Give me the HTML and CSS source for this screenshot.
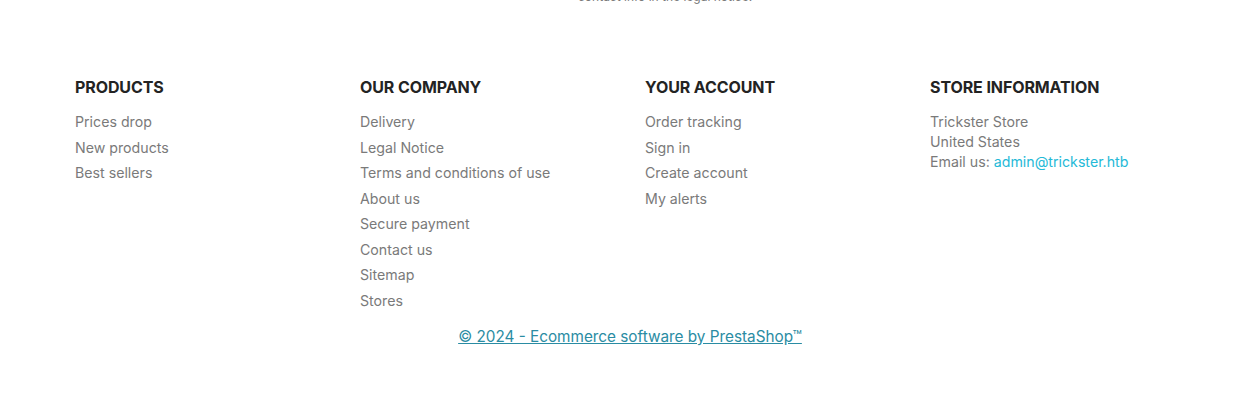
FILE: index.html
```html
<!DOCTYPE html>
<html lang="en">
<head>
<meta charset="utf-8">
<title>Footer</title>
<link rel="stylesheet" href="styles.css">
</head>
<body>
<div class="page">
  <div class="newsletter-note">
    <p>contact info in the legal notice.</p>
  </div>
  <footer class="footer">
    <div class="cols">
      <div class="col">
        <h3 class="col-title">PRODUCTS</h3>
        <ul class="links">
          <li><a href="#">Prices drop</a></li>
          <li><a href="#">New products</a></li>
          <li><a href="#">Best sellers</a></li>
        </ul>
      </div>
      <div class="col">
        <h3 class="col-title">OUR COMPANY</h3>
        <ul class="links">
          <li><a href="#">Delivery</a></li>
          <li><a href="#">Legal Notice</a></li>
          <li><a href="#">Terms and conditions of use</a></li>
          <li><a href="#">About us</a></li>
          <li><a href="#">Secure payment</a></li>
          <li><a href="#">Contact us</a></li>
          <li><a href="#">Sitemap</a></li>
          <li><a href="#">Stores</a></li>
        </ul>
      </div>
      <div class="col">
        <h3 class="col-title">YOUR ACCOUNT</h3>
        <ul class="links">
          <li><a href="#">Order tracking</a></li>
          <li><a href="#">Sign in</a></li>
          <li><a href="#">Create account</a></li>
          <li><a href="#">My alerts</a></li>
        </ul>
      </div>
      <div class="col">
        <h3 class="col-title">STORE INFORMATION</h3>
        <div class="store-info">
          <div>Trickster Store</div>
          <div>United States</div>
          <div>Email us: <a class="email" href="#">admin@trickster.htb</a></div>
        </div>
      </div>
    </div>
    <p class="copyright"><a href="#">© 2024 - Ecommerce software by PrestaShop™</a></p>
  </footer>
</div>
</body>
</html>
```

FILE: styles.css
```css
* { box-sizing: border-box; }
html, body { margin: 0; padding: 0; background: #fff; }
body {
  font-family: Inter, "Noto Sans", "Liberation Sans", sans-serif;
  color: #7a7a7a;
  width: 1235px;
  height: 408px;
  overflow: hidden;
}
.page { width: 1140px; margin-left: 60px; }
.newsletter-note {
  padding-left: 518px;
  height: 4px;
  overflow: visible;
}
.newsletter-note p {
  margin: -10px 0 0 0;
  font-size: 12px;
  line-height: 14px;
  color: #7a7a7a;
}
.footer { padding-top: 82px; }
.cols { display: flex; }
.col { width: 285px; padding: 0 15px; }
.col-title {
  margin: 0 0 11px 0;
  font-size: 16px;
  line-height: 22px;
  font-weight: 700;
  color: #232323;
  letter-spacing: -0.1px;
}
.links { list-style: none; margin: 0; padding: 0; }
.links li { line-height: 25.5px; font-size: 14.2px; }
.links a { color: #7a7a7a; text-decoration: none; }
.store-info { font-size: 14.2px; line-height: 20px; padding-top: 3px; }
.email { color: #24b9d7; text-decoration: none; }
.copyright {
  margin: 13px 0 0 0;
  text-align: center;
  font-size: 15.3px;
  line-height: 22px;
}
.copyright a { color: #2a8ca3; text-decoration: underline; }
```
